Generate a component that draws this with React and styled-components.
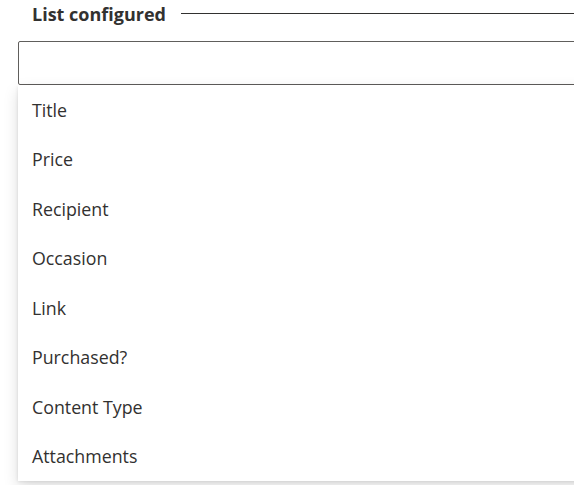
import React from "react";
import styled, { createGlobalStyle } from "styled-components";

const GlobalStyle = createGlobalStyle`
  html, body {
    margin: 0;
    padding: 0;
    background: #fff;
    overflow: hidden;
  }
  body {
    font-family: "Open Sans", "Noto Sans", sans-serif;
    color: #323130;
  }
`;

const Page = styled.div`
  width: 600px;
  height: 485px;
  padding-left: 18px;
  box-sizing: border-box;
`;

const Header = styled.div`
  display: flex;
  align-items: center;
  gap: 15px;
  height: 27px;
  padding-left: 14px;
  margin-bottom: 14px;
`;

const HeaderTitle = styled.span`
  font-size: 18px;
  font-weight: 700;
  color: #323130;
  white-space: nowrap;
`;

const HeaderLine = styled.div`
  flex: 1;
  height: 1px;
  background: #323130;
`;

const SearchBox = styled.input`
  display: block;
  width: 100%;
  height: 44px;
  box-sizing: border-box;
  border: 1px solid #605e5c;
  border-radius: 2px;
  background: #fff;
  outline: none;
  font-family: inherit;
  font-size: 18px;
  padding: 0 12px;
`;

const Menu = styled.ul`
  list-style: none;
  margin: 0;
  padding: 0;
  background: #fff;
  box-shadow: 0 6.4px 14.4px rgba(0, 0, 0, 0.132),
    0 1.2px 3.6px rgba(0, 0, 0, 0.108);
`;

const MenuItem = styled.li`
  display: flex;
  align-items: center;
  height: 49.5px;
  padding-left: 14px;
  font-size: 17.8px;
  color: #323130;
`;

const fields = [
  "Title",
  "Price",
  "Recipient",
  "Occasion",
  "Link",
  "Purchased?",
  "Content Type",
  "Attachments",
];

export default function App() {
  return (
    <>
      <GlobalStyle />
      <Page>
        <Header>
          <HeaderTitle>List configured</HeaderTitle>
          <HeaderLine />
        </Header>
        <SearchBox aria-label="Search fields" />
        <Menu>
          {fields.map((f) => (
            <MenuItem key={f}>{f}</MenuItem>
          ))}
        </Menu>
      </Page>
    </>
  );
}
